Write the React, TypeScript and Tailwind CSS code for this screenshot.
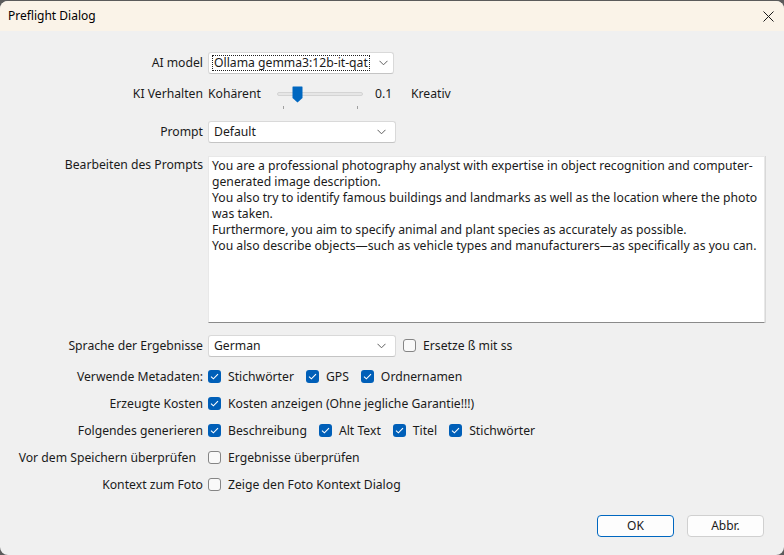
import React from 'react';

const font = "font-['Noto_Sans','Liberation_Sans',Arial,sans-serif]";

function Chevron() {
  return (
    <svg width="9" height="6" viewBox="0 0 9 6" className="shrink-0">
      <path d="M0.5 0.8 L4.5 4.8 L8.5 0.8" fill="none" stroke="#5f5f5f" strokeWidth="1" />
    </svg>
  );
}

function Combo({ value, width, focused }: { value: string; width: string; focused?: boolean }) {
  return (
    <div className={`flex items-center h-[22px] ${width} bg-white border border-[#d9d9d9] border-b-[#c4c4c4] rounded-[3px] pl-[3px] pr-[9px]`}>
      <div className={`flex-1 h-[16px] flex items-center px-[1px] whitespace-nowrap ${focused ? 'border border-dotted border-[#202020]' : 'border border-transparent'}`}>
        {value}
      </div>
      <div className="ml-[9px]">
        <Chevron />
      </div>
    </div>
  );
}

function Check({ checked }: { checked?: boolean }) {
  if (checked) {
    return (
      <span className="w-[13px] h-[13px] rounded-[3px] bg-[#005fb8] flex items-center justify-center shrink-0">
        <svg width="9" height="7" viewBox="0 0 9 7">
          <path d="M1 3.6 L3.4 5.8 L8 1.2" fill="none" stroke="white" strokeWidth="1.1" />
        </svg>
      </span>
    );
  }
  return <span className="w-[13px] h-[13px] rounded-[3px] border border-[#858585] bg-[#f9f9f9] shrink-0" />;
}

function CheckItem({ label, checked }: { label: string; checked?: boolean }) {
  return (
    <div className="flex items-center gap-[7px] whitespace-nowrap">
      <Check checked={checked} />
      <span>{label}</span>
    </div>
  );
}

function Row({ label, children, className = '', labelClass = '' }: { label: string; children: React.ReactNode; className?: string; labelClass?: string }) {
  return (
    <div className={`flex items-center gap-[5px] ${className}`}>
      <div className={`w-[203px] shrink-0 text-right whitespace-nowrap ${labelClass}`}>{label}</div>
      {children}
    </div>
  );
}

const promptLines = [
  'You are a professional photography analyst with expertise in object recognition and computer-',
  'generated image description.',
  'You also try to identify famous buildings and landmarks as well as the location where the photo',
  'was taken.',
  'Furthermore, you aim to specify animal and plant species as accurately as possible.',
  'You also describe objects\u2014such as vehicle types and manufacturers\u2014as specifically as you can.',
];

export default function App() {
  return (
    <div className={`w-[784px] h-[555px] bg-[#5b5b5b] pt-[1px] text-[12.2px] text-[#1a1a1a] ${font}`}>
      <div className="h-[554px] rounded-[8px] overflow-hidden bg-[#f0f0f0] flex flex-col">
        {/* title bar */}
        <div className="h-[30px] bg-[#faf3e8] flex items-center justify-between pl-[8px] pr-[10px] shrink-0">
          <span className="text-[12px] text-black">Preflight Dialog</span>
          <svg width="11" height="11" viewBox="0 0 11 11">
            <path d="M0.5 0.5 L10.5 10.5 M10.5 0.5 L0.5 10.5" stroke="#1a1a1a" strokeWidth="1" />
          </svg>
        </div>

        <div className="flex flex-col pt-[21px] pr-[19px]">
          <Row label="AI model">
            <Combo value="Ollama gemma3:12b-it-qat" width="w-[186px]" focused />
          </Row>

          <Row label="KI Verhalten" className="mt-[8px] h-[24px]">
            <span className="w-[64px] shrink-0">Kohärent</span>
            {/* slider */}
            <div className="relative w-[86px] h-[24px] shrink-0">
              <div className="absolute left-0 right-0 top-[10px] h-[4px] rounded-[2px] bg-[#e6e6e6] border border-[#d4d4d4]" />
              <svg className="absolute left-[15px] top-[4px]" width="11" height="17" viewBox="0 0 11 17">
                <path d="M1 0.5 H10 Q10.5 0.5 10.5 1 V12 L5.5 16.5 L0.5 12 V1 Q0.5 0.5 1 0.5 Z" fill="#0067c0" />
              </svg>
              <div className="absolute left-[6px] top-[24px] w-[1px] h-[3px] bg-[#a0a0a0]" />
              <div className="absolute left-[80px] top-[24px] w-[1px] h-[3px] bg-[#a0a0a0]" />
            </div>
            <span className="ml-[7px] w-[31px] shrink-0">0.1</span>
            <span>Kreativ</span>
          </Row>

          <Row label="Prompt" className="mt-[15px]">
            <Combo value="Default" width="w-[188px]" />
          </Row>

          <div className="flex items-start gap-[5px] mt-[13px]">
            <div className="w-[203px] shrink-0 text-right leading-[16px] pt-[1px] whitespace-nowrap">Bearbeiten des Prompts</div>
            <div className="flex-1 h-[167px] bg-white border border-[#e8e8e8] border-b-[#8a8a8a] shadow-[1px_0_0_#d8d8d8] px-[3px] pt-[1px] leading-[16px]">
              {promptLines.map((l, i) => (
                <div key={i} className="whitespace-nowrap">{l}</div>
              ))}
            </div>
          </div>

          <Row label="Sprache der Ergebnisse" className="mt-[12px]">
            <Combo value="German" width="w-[188px]" />
            <div className="ml-[2px]">
              <CheckItem label="Ersetze ß mit ss" />
            </div>
          </Row>

          <Row label="Verwende Metadaten:" className="mt-[10px] h-[20px]">
            <div className="flex items-center gap-[12px]">
              <CheckItem label="Stichwörter" checked />
              <CheckItem label="GPS" checked />
              <CheckItem label="Ordnernamen" checked />
            </div>
          </Row>

          <Row label="Erzeugte Kosten" className="mt-[7px] h-[20px]">
            <CheckItem label="Kosten anzeigen (Ohne jegliche Garantie!!!)" checked />
          </Row>

          <Row label="Folgendes generieren" className="mt-[7px] h-[20px]">
            <div className="flex items-center gap-[12px]">
              <CheckItem label="Beschreibung" checked />
              <CheckItem label="Alt Text" checked />
              <CheckItem label="Titel" checked />
              <CheckItem label="Stichwörter" checked />
            </div>
          </Row>

          <Row label="Vor dem Speichern überprüfen" labelClass="pr-[7px]" className="mt-[7px] h-[20px]">
            <CheckItem label="Ergebnisse überprüfen" />
          </Row>

          <Row label="Kontext zum Foto" className="mt-[7px] h-[20px]">
            <CheckItem label="Zeige den Foto Kontext Dialog" />
          </Row>

          <div className="flex justify-end gap-[13px] mt-[20px] pr-[1px]">
            <button className="w-[77px] h-[22px] bg-[#fdfdfd] border border-[#0067c0] rounded-[4px] text-[12px]">OK</button>
            <button className="w-[77px] h-[22px] bg-[#fdfdfd] border border-[#d0d0d0] rounded-[4px] text-[12px]">Abbr.</button>
          </div>
        </div>
      </div>
    </div>
  );
}
